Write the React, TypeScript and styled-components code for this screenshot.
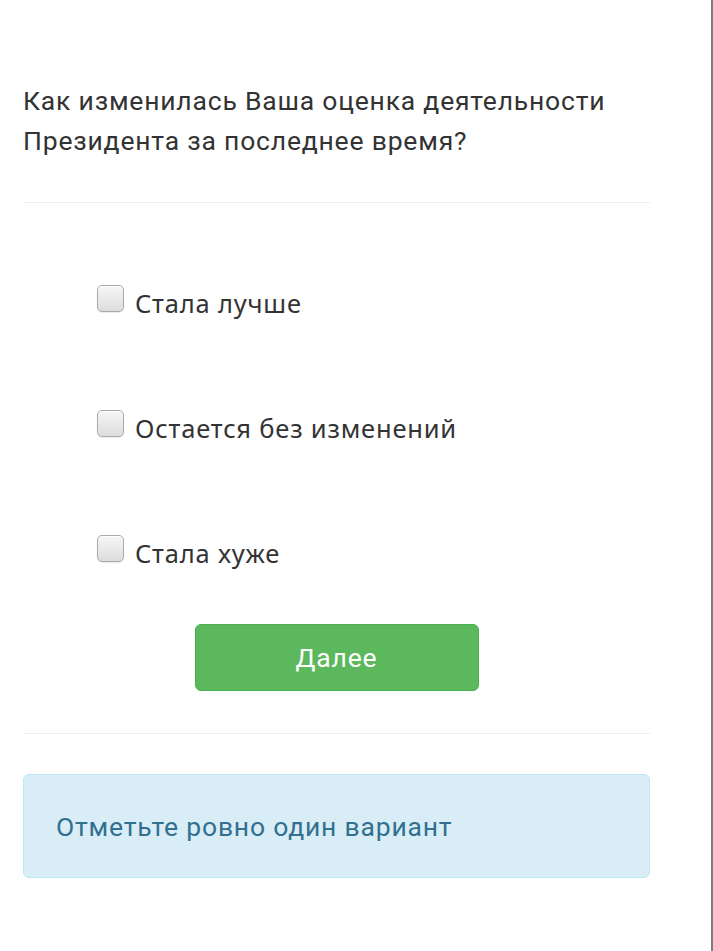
import React from 'react'
import styled, { createGlobalStyle } from 'styled-components'

const GlobalStyle = createGlobalStyle`
    html, body {
        margin: 0;
        padding: 0;
        background: #ffffff;
    }
`

const Page = styled.div`
    box-sizing: border-box;
    width: 713px;
    min-height: 951px;
    border-right: 2px solid #7d7d7d;
    padding: 81px 0 0 23px;
    font-family: Roboto, 'Liberation Sans', sans-serif;
    letter-spacing: 0.8px;
`
const Form = styled.div`
    width: 627px;
    display: flex;
    flex-direction: column;
`
const Question = styled.h3`
    margin: 0;
    font-size: 26.5px;
    font-weight: 400;
    line-height: 40px;
    color: #333333;
`
const Divider = styled.hr`
    border: 0;
    border-top: 1px solid #eeeeee;
    margin: ${(p: { top: number }) => p.top}px 0 0;
    width: 100%;
`
const Options = styled.div`
    display: flex;
    flex-direction: column;
    gap: 85px;
    padding: 80px 0 0 74px;
`
const Option = styled.label`
    display: flex;
    align-items: center;
    height: 40px;
    font-family: 'Noto Sans', Roboto, sans-serif;
    font-size: 25.5px;
    color: #333333;
`
const Box = styled.span`
    box-sizing: border-box;
    width: 27px;
    height: 27px;
    margin: 0 11px 10px 0;
    border: 1px solid #a9a9a9;
    border-radius: 5px;
    background: linear-gradient(#f6f6f6, #dddddd);
    box-shadow: inset 0 1px 0 #ffffff, 0 1px 1px rgba(0, 0, 0, 0.08);
`
const Actions = styled.div`
    display: flex;
    justify-content: center;
    padding-top: 51px;
`
const NextButton = styled.button`
    width: 284px;
    height: 67px;
    border: 1px solid #4cae4c;
    border-radius: 6px;
    background-color: #5cb85c;
    color: #ffffff;
    font-family: Roboto, sans-serif;
    font-size: 26.5px;
    letter-spacing: 0.8px;
    padding: 0;
`
const Alert = styled.div`
    box-sizing: border-box;
    margin-top: 40px;
    height: 104px;
    display: flex;
    align-items: center;
    padding: 0 32px;
    border: 1px solid #bce8f1;
    border-radius: 6px;
    background-color: #d9edf7;
    color: #31708f;
    font-size: 26.5px;
`

const answers = ['Стала лучше', 'Остается без изменений', 'Стала хуже']

export default function App() {
    return (
        <Page>
            <GlobalStyle />
            <Form>
                <Question>
                    Как изменилась Ваша оценка деятельности Президента за последнее время?
                </Question>
                <Divider top={41} />
                <Options>
                    {answers.map((a) => (
                        <Option key={a}>
                            <Box />
                            {a}
                        </Option>
                    ))}
                </Options>
                <Actions>
                    <NextButton>Далее</NextButton>
                </Actions>
                <Divider top={42} />
                <Alert>Отметьте ровно один вариант</Alert>
            </Form>
        </Page>
    )
}
